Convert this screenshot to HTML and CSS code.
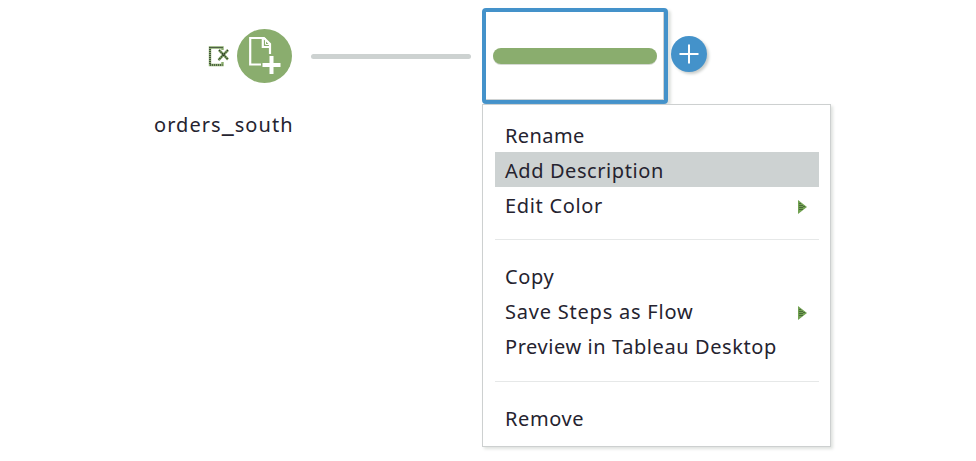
FILE: index.html
```html
<!DOCTYPE html>
<html lang="en">
<head>
<meta charset="utf-8">
<title>Flow</title>
<link rel="stylesheet" href="styles.css">
</head>
<body>
<main class="canvas">
  <svg class="connection-icon" viewBox="0 0 22 22" aria-hidden="true">
    <path class="frame" d="M14.5 5V2.5H2V20h12.5v-3"/>
    <path class="frame-dots" d="M14.5 2.5H2V20h12.5"/>
    <path class="cross" d="M11 5l9 9.5M20 5l-9.5 10"/>
    <path class="cross-core" d="M11 5l9 9.5M20 5l-9.5 10"/>
  </svg>
  <div class="input-node">
    <svg viewBox="0 0 55 55" aria-hidden="true">
      <path class="page" d="M24 35.5H13.2V9H27L33 15V25M25.8 9V18H34"/>
      <path class="fold" d="M28.5 9v6.5h5.5"/>
      <path class="add" d="M34.5 27v18M25.5 36h18"/>
    </svg>
  </div>
  <div class="input-label">orders<span class="underscore">_</span>south</div>
  <div class="connector"></div>
  <div class="step-node"><div class="step-bar"></div></div>
  <button class="add-step" aria-label="Add step">
    <svg viewBox="0 0 36 36" aria-hidden="true"><path d="M18 8.5v19M8.5 18h19"/></svg>
  </button>
  <ul class="menu">
    <li class="item rename">Rename</li>
    <li class="item selected">Add Description</li>
    <li class="item edit">Edit Color<svg class="arrow" viewBox="0 0 9 14"><path d="M0 0L9 7 0 14z"/><path class="core" d="M2 3v8M4 5v5M6 6v2"/></svg></li>
    <li class="separator"></li>
    <li class="item copy">Copy</li>
    <li class="item save">Save Steps as Flow<svg class="arrow" viewBox="0 0 9 14"><path d="M0 0L9 7 0 14z"/><path class="core" d="M2 3v8M4 5v5M6 6v2"/></svg></li>
    <li class="item preview">Preview in Tableau Desktop</li>
    <li class="separator"></li>
    <li class="item remove">Remove</li>
  </ul>
</main>
</body>
</html>
```
FILE: styles.css
```css
* { box-sizing: border-box; }
body {
  margin: 0;
  background: #fff;
  color: #25232f;
  font: 20px/35px "Noto Sans", sans-serif;
}
.canvas { position: relative; width: 976px; height: 461px; overflow: hidden; }
svg { display: block; fill: none; }

.connection-icon { position: absolute; left: 208px; top: 45px; width: 22px; height: 22px; }
.frame { stroke: #8aad6e; stroke-width: 2.4; }
.frame-dots { stroke: #17171f; stroke-width: 1.2; stroke-dasharray: 1 1; }
.cross { stroke: #8aad6e; stroke-width: 2.6; }
.cross-core { stroke: #2c3a26; stroke-width: 1.3; stroke-dasharray: 1.4 .8; }

.input-node {
  position: absolute; left: 237px; top: 29px; width: 55px; height: 54px;
  border-radius: 50%; background: #8aad6e;
}
.input-node svg { width: 55px; height: 55px; }
.page { stroke: #fff; stroke-width: 2.2; }
.fold { stroke: #fff; stroke-width: 1; }
.add { stroke: #fff; stroke-width: 4; }
.input-label {
  position: absolute; left: 154px; top: 107px;
  letter-spacing: 1.05px; white-space: nowrap;
}
.underscore { font-size: 27px; line-height: 1; }
.connector {
  position: absolute; left: 311px; top: 54px; width: 160px; height: 5px;
  border-radius: 3px; background: #cdd2d1;
}

.step-node {
  position: absolute; left: 482px; top: 8px; width: 186px; height: 96px;
  display: flex; align-items: center; padding: 0 7px;
  border: 4px solid #4492ca; border-radius: 4px; background: #fff;
  box-shadow: inset -1px -1px #cfd2d2, 3px 2px 3px #dfe2df;
}
.step-bar { flex: 1; height: 16px; border-radius: 8px; background: #8aad6e; box-shadow: 0 1px #d5d9d3; }
.add-step {
  position: absolute; left: 671px; top: 36px; width: 36px; height: 36px;
  padding: 0; border: 0; border-radius: 50%; background: #4492ca;
  box-shadow: 2px 2px 3px #c9cdcb;
}
.add-step svg { width: 36px; height: 36px; }
.add-step path { stroke: #fff; stroke-width: 2; }

.menu {
  position: absolute; left: 482px; top: 104px; width: 349px; height: 343px;
  margin: 0; padding: 12px 11px 10px 12px; list-style: none;
  border: 1px solid #cdd0d0; background: #fff;
  box-shadow: 2px 2px 3px #dfe2df;
}
.item {
  display: flex; align-items: center; justify-content: space-between;
  width: 324px; height: 35px; padding: 2px 12px 0 10px;
  letter-spacing: .58px; white-space: nowrap;
}
.rename { letter-spacing: .4px; }
.edit { letter-spacing: .68px; }
.save { letter-spacing: .78px; }
.selected { background: #cdd2d2; }
.separator { width: 324px; height: 1px; margin: 17px 0 18px; background: #e6e8e8; }
.preview + .separator { margin-top: 18px; }
.arrow { width: 9px; height: 14px; margin-top: 2px; }
.arrow path { fill: #72a252; }
.arrow .core { fill: none; stroke: #253322; stroke-width: 1; stroke-dasharray: 1 1; }
```
